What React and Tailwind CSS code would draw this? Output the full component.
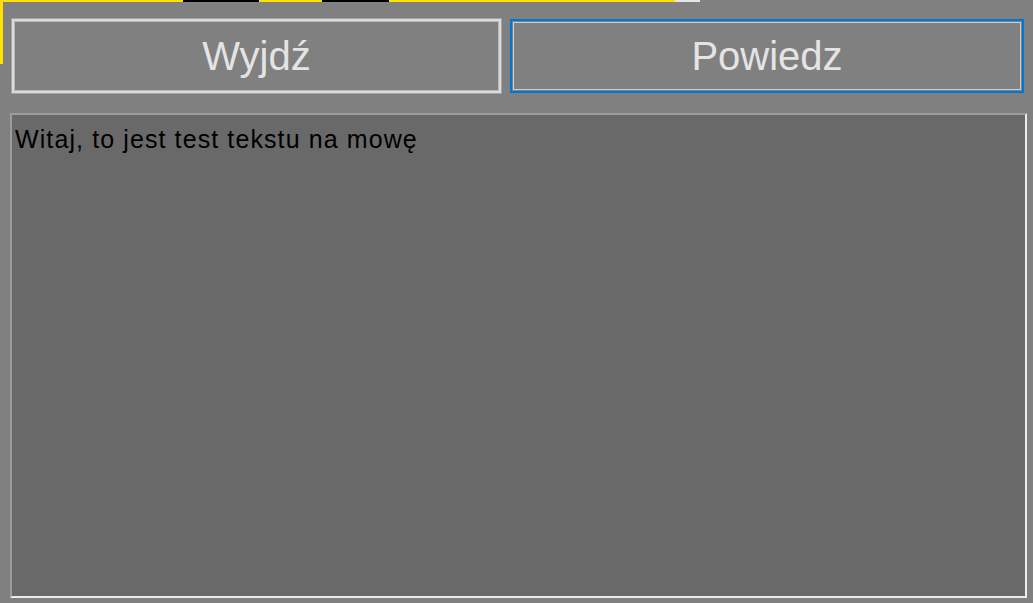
export default function App() {
  return (
    <div className="relative h-[603px] w-[1033px] overflow-hidden bg-[#808080] font-['Liberation_Sans',Arial,sans-serif]">
      {/* window edge remnants */}
      <div aria-hidden className="absolute left-0 top-0 flex h-[2px] w-[700px]">
        <div className="w-[183px] bg-[#ffe000]" />
        <div className="w-[76px] bg-black" />
        <div className="w-[63px] bg-[#ffe000]" />
        <div className="w-[67px] bg-black" />
        <div className="w-[286px] bg-[#ffe000]" />
        <div className="flex-1 bg-[#e6e6e6]" />
      </div>
      <div aria-hidden className="absolute left-0 top-0 h-[64px] w-[3px] bg-[#ffe000]" />

      <div className="flex flex-col pt-[19px]">
        <div className="flex gap-[9px] pl-[12px]">
          <button className="flex h-[74px] w-[489px] items-center justify-center border-2 border-[#dcdcdc] shadow-[0_0_0_1px_#a4a4a4,inset_0_0_0_1px_#b8b8b8] text-[40px] text-[#e4e4e4]">
            Wyjdź
          </button>
          <button className="flex h-[74px] w-[514px] items-center justify-center border-2 border-[#0078d7] shadow-[inset_0_0_0_1px_#808080,inset_0_0_0_2px_#cfcfcf] text-[40px] text-[#e4e4e4]">
            Powiedz
          </button>
        </div>

        <div className="ml-[10px] mt-[20px] h-[485px] w-[1017px] border-2 border-b-[#ececec] border-l-[#9c9c9c] border-r-[#ececec] border-t-[#9c9c9c] bg-[#696969] pl-[3px] pt-[10px]">
          <p className="text-[25px] leading-[28px] tracking-[1.1px] text-black">Witaj, to jest test tekstu na mowę</p>
        </div>
      </div>
    </div>
  )
}
